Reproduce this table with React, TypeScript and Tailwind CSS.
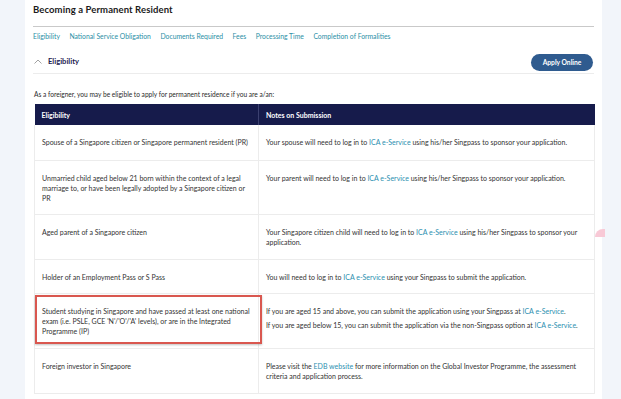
import React from 'react'

const Link = ({ children }: { children: React.ReactNode }) => (
  <span className="text-[#2b8fb0]">{children}</span>
)

const rows: { h: string; left: React.ReactNode; right: React.ReactNode; mark?: boolean }[] = [
  {
    h: 'h-[35px]',
    left: 'Spouse of a Singapore citizen or Singapore permanent resident (PR)',
    right: (
      <p>
        Your spouse will need to log in to <Link>ICA e-Service</Link> using his/her Singpass to sponsor your application.
      </p>
    ),
  },
  {
    h: 'h-[54px]',
    left: 'Unmarried child aged below 21 born within the context of a legal marriage to, or have been legally adopted by a Singapore citizen or PR',
    right: (
      <p>
        Your parent will need to log in to <Link>ICA e-Service</Link> using his/her Singpass to sponsor your application.
      </p>
    ),
  },
  {
    h: 'h-[45px]',
    left: 'Aged parent of a Singapore citizen',
    right: (
      <p>
        Your Singapore citizen child will need to log in to <Link>ICA e-Service</Link> using his/her Singpass to sponsor your
        application.
      </p>
    ),
  },
  {
    h: 'h-[34px]',
    left: 'Holder of an Employment Pass or S Pass',
    right: (
      <p>
        You will need to log in to <Link>ICA e-Service</Link> using your Singpass to submit the application.
      </p>
    ),
  },
  {
    h: 'h-[55px]',
    mark: true,
    left: "Student studying in Singapore and have passed at least one national exam (i.e. PSLE, GCE 'N'/'O'/'A' levels), or are in the Integrated Programme (IP)",
    right: (
      <>
        <p>
          If you are aged 15 and above, you can submit the application using your Singpass at <Link>ICA e-Service</Link>.
        </p>
        <p className="mt-[4.5px]">
          If you are aged below 15, you can submit the application via the non-Singpass option at <Link>ICA e-Service</Link>.
        </p>
      </>
    ),
  },
  {
    h: 'h-[45px]',
    left: 'Foreign investor in Singapore',
    right: (
      <p>
        Please visit the <Link>EDB website</Link> for more information on the Global Investor Programme, the assessment
        criteria and application process.
      </p>
    ),
  },
]

const tabs = [
  'Eligibility',
  'National Service Obligation',
  'Documents Required',
  'Fees',
  'Processing Time',
  'Completion of Formalities',
]

export default function App() {
  return (
    <div
      className="w-[621px] h-[399px] overflow-hidden bg-[#f2f5fa] flex"
      style={{ fontFamily: 'Lato, "Noto Sans", sans-serif' }}
    >
      <div className="ml-[25px] w-[577px] bg-white px-[8px] relative">
        <h1 className="h-[20px] flex items-center text-[9.5px] font-bold text-[#1b1b1b] tracking-[0.1px]">
          Becoming a Permanent Resident
        </h1>
        <div className="border-t border-[#c9c9c9] mt-[6px]" />

        <div className="flex gap-[9.5px] text-[6.8px] text-[#2b8fa6] mt-[5px] h-[9px] items-center">
          {tabs.map((t) => (
            <span key={t}>{t}</span>
          ))}
        </div>

        <div className="flex items-center justify-between h-[22px] mt-[10px] pr-[1px]">
          <div className="flex items-center gap-[6px] pl-[1px]">
            <svg width="8" height="5" viewBox="0 0 8 5" fill="none">
              <path d="M0.5 4.5 L4 1 L7.5 4.5" stroke="#8a8a8a" strokeWidth="0.8" />
            </svg>
            <span className="text-[7.6px] font-bold text-[#1d2150]">Eligibility</span>
          </div>
          <button className="w-[62px] h-[17px] rounded-full bg-[#2f5b8f] text-white text-[6.7px] font-bold">
            Apply Online
          </button>
        </div>
        <div className="border-t border-[#ececec]" />

        <p className="text-[6.6px] text-[#2a2a2a] mt-[15px] ml-[1px] leading-[10px]">
          As a foreigner, you may be eligible to apply for permanent residence if you are a/an:
        </p>

        <table className="mt-[5px] ml-[1px] w-[560px] border-collapse text-[7px] text-[#333] leading-[10px] table-fixed">
          <colgroup>
            <col className="w-[224px]" />
            <col className="w-[336px]" />
          </colgroup>
          <thead>
            <tr className="h-[21px] bg-[#161b4b] text-white font-bold text-left">
              <th className="pl-[7px] font-bold border-r border-[#3b4070]">Eligibility</th>
              <th className="pl-[7px] font-bold">Notes on Submission</th>
            </tr>
          </thead>
          <tbody>
            {rows.map((r, i) => (
              <tr key={i} className={`${r.h} border-b border-x border-[#ececec] align-top`}>
                <td className="relative pl-[7px] pr-[8px] pt-[12px] border-r border-[#ececec]">
                  {r.mark && (
                    <div className="absolute left-0 top-[1px] w-[227px] h-[49px] border-2 border-[#d9574f] shadow-[0_1px_2px_rgba(0,0,0,0.25)]" />
                  )}
                  {r.left}
                </td>
                <td className="pl-[7px] pr-[12px] pt-[12px]">{r.right}</td>
              </tr>
            ))}
          </tbody>
        </table>

        <div className="absolute right-[-3px] top-[229px] w-[10px] h-[8px] rounded-tl-full rounded-bl-[3px] bg-[#f8c9d6]" />
      </div>
    </div>
  )
}
